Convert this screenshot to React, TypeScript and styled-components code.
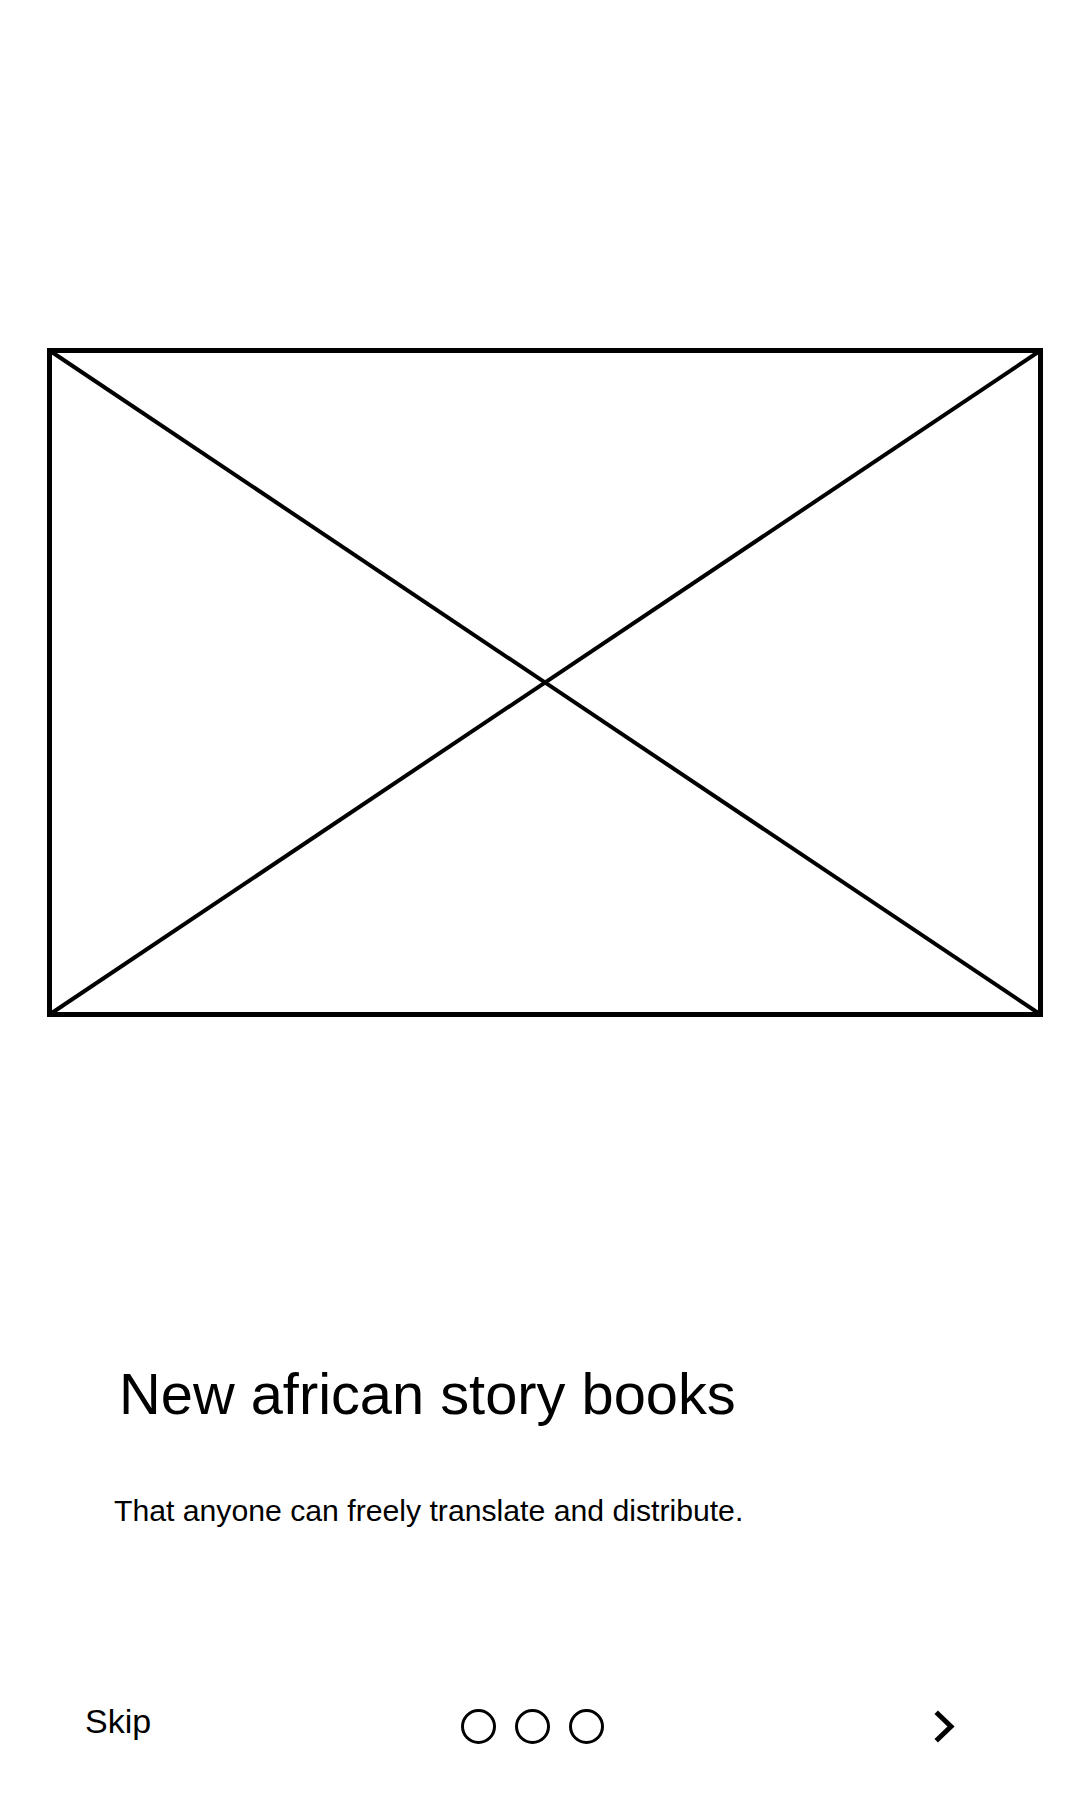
import React from "react";
import styled, { createGlobalStyle } from "styled-components";

const Global = createGlobalStyle`
  html, body {
    margin: 0;
    padding: 0;
    background: #ffffff;
  }
  body {
    font-family: "Liberation Sans", Arial, sans-serif;
    color: #000000;
  }
`;

const Screen = styled.main`
  width: 1080px;
  height: 1800px;
  box-sizing: border-box;
  padding-top: 348px;
  display: flex;
  flex-direction: column;
  background: #ffffff;
  overflow: hidden;
`;

const Placeholder = styled.svg`
  display: block;
  margin-left: 47px;
  width: 996px;
  height: 669px;
`;

const Heading = styled.h1`
  margin: 348px 0 0 119px;
  font-family: "Liberation Sans", Arial, sans-serif;
  font-weight: 400;
  font-size: 57.8px;
  line-height: 58px;
  color: #000;
`;

const Lead = styled.p`
  margin: 73px 0 0 114px;
  font-family: "Liberation Sans", Arial, sans-serif;
  font-size: 30.2px;
  line-height: 30px;
  color: #000;
`;

const Footer = styled.nav`
  margin-top: 182px;
  padding-left: 85px;
  display: grid;
  grid-template-columns: 376px 143px auto;
  align-items: start;
  height: 36px;
`;

const SkipButton = styled.button`
  justify-self: start;
  margin-top: -3px;
  border: none;
  background: none;
  padding: 0;
  font-family: "Liberation Sans", Arial, sans-serif;
  font-size: 34px;
  line-height: 32px;
  color: #000;
  cursor: pointer;
`;

const Dots = styled.div`
  display: flex;
  gap: 19px;
  padding-top: 1px;
`;

const Dot = styled.span<{ $active?: boolean }>`
  box-sizing: border-box;
  width: 35px;
  height: 35px;
  border-radius: 50%;
  border: 3px solid #000;
  background: ${(p) => (p.$active ? "#000" : "transparent")};
`;

const NextButton = styled.button`
  margin-left: 327px;
  width: 26px;
  height: 36px;
  border: none;
  background: none;
  padding: 0;
  cursor: pointer;
  display: flex;
  align-items: center;
  justify-content: center;
`;

export default function App() {
  return (
    <>
      <Global />
      <Screen>
        <Placeholder viewBox="0 0 996 669" preserveAspectRatio="none">
          <rect x="2.5" y="2.5" width="991" height="664" fill="none" stroke="#000" strokeWidth="5" />
          <line x1="2.5" y1="2.5" x2="993.5" y2="666.5" stroke="#000" strokeWidth="4" />
          <line x1="993.5" y1="2.5" x2="2.5" y2="666.5" stroke="#000" strokeWidth="4" />
        </Placeholder>
        <Heading>New african story books</Heading>
        <Lead>That anyone can freely translate and distribute.</Lead>
        <Footer>
          <SkipButton>Skip</SkipButton>
          <Dots>
            <Dot />
            <Dot />
            <Dot />
          </Dots>
          <NextButton aria-label="Next">
            <svg width="26" height="35" viewBox="0 0 26 35">
              <polyline
                points="7,5 20,17.5 7,30"
                fill="none"
                stroke="#000"
                strokeWidth="5"
                strokeLinecap="square"
                strokeLinejoin="miter"
              />
            </svg>
          </NextButton>
        </Footer>
      </Screen>
    </>
  );
}
